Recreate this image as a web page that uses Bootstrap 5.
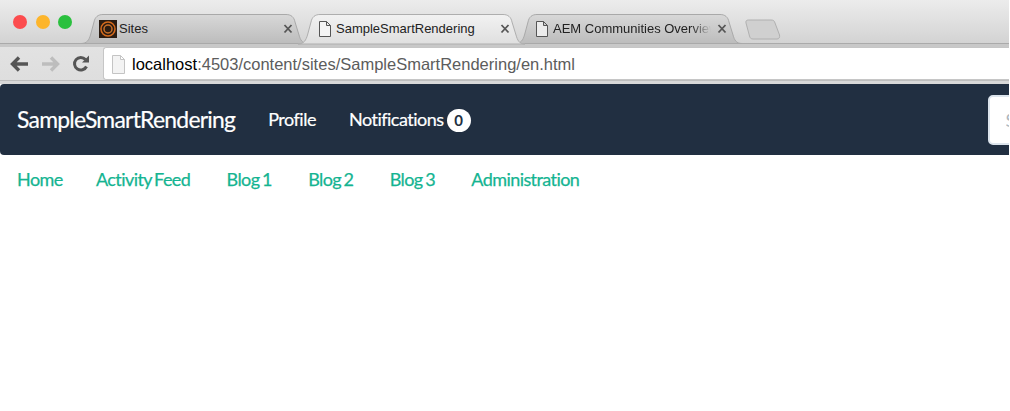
<!DOCTYPE html>
<html lang="en">
<head>
<meta charset="utf-8">
<title>SampleSmartRendering</title>
<link rel="stylesheet" href="https://cdn.jsdelivr.net/npm/bootstrap@5.3.0/dist/css/bootstrap.min.css">
<style>
html,body{height:411px;overflow:hidden;background:#fff}
body{font-family:"Liberation Sans",Arial,sans-serif;padding-right:1px}
.chrome-top{height:44px;background:linear-gradient(#ececec,#d3d3d3);border-bottom:1px solid #aaa}
.lights{gap:8.5px;padding:15px 0 0 13px;width:84px;flex:none}
.light{width:14px;height:14px;border-radius:50%}
.l-r{background:#fc4c4e}.l-y{background:#fdb52b}.l-g{background:#2ac03e}
.tabs{padding-top:14px}
.tab-shape{position:relative;width:227px;height:30px;margin-right:-10px;font-size:13px;color:#222;flex:none}
.tab-shape>svg.bg{position:absolute;left:0;top:0}
.tab-body{position:relative;height:30px;padding:0 0 0 18px;gap:2px}
.tab-fav{width:18px;height:18px;flex:none}
.tab-label{white-space:nowrap;overflow:hidden;width:175px;line-height:30px}
.tab-fade{width:160px;-webkit-mask-image:linear-gradient(90deg,#000 138px,transparent 158px);mask-image:linear-gradient(90deg,#000 138px,transparent 158px)}
.tab-x{position:absolute;right:15px;top:8px;width:10px;height:14px}
.new-tab{margin:5px 0 0 13px}
.toolbar{background:linear-gradient(#e2e2e2,#dedede);border-top:3px solid #c8c8c8;box-sizing:content-box;height:33px}
.nav-ics{width:103px;flex:none;padding-left:10px;gap:12px}
.urlbox{flex:1;background:#fff;border:1px solid #c6c6c6;border-right:0;border-radius:3px 0 0 3px;height:33px;padding:2px 0 0 7px;gap:6px;font-size:16.5px;color:#5c5c5c}
.urlbox b{font-weight:400;color:#000}
.toolbar-gap{height:4px;background:#d8d8d8;border-top:1px solid #bdbdbd}
.site-bar{height:71px;background:#212f41;border-radius:4px 0 0 4px;overflow:hidden;padding-left:17px;font-family:Lato,sans-serif;flex-wrap:nowrap}
.site-brand{color:#fff;font-size:22.9px;letter-spacing:-.75px;text-decoration:none;margin-right:33px;white-space:nowrap;line-height:1;-webkit-text-stroke:.2px #fff}
.site-link{color:#fff;font-size:18px;letter-spacing:-.5px;text-decoration:none;margin-right:33px;white-space:nowrap;-webkit-text-stroke:.2px #fff}
.count{background:#fff;color:#212f41;border-radius:12px;font-size:15px;font-weight:700;letter-spacing:0;width:24px;height:23px;margin-left:3px;line-height:23px;text-align:center;display:inline-block;vertical-align:0;-webkit-text-stroke:0}
.search-in{flex:none;width:160px;height:50px;margin-left:484px;border:2px solid #dce4ec;border-radius:5px;background:#fff;font-size:18px;padding:0 16px;font-family:Lato,sans-serif}
.search-in::placeholder{color:#acb6c0}
.sub-links{padding:12px 0 0 17px;gap:36.3px;font-family:Lato,sans-serif;font-size:18px;letter-spacing:-.58px;word-spacing:-1.5px;line-height:25px;-webkit-text-stroke:.25px #14b491}
.sub-links a{color:#14b491;text-decoration:none}
.sub-links a:first-child{margin-right:-3px}
</style>
</head>
<body>
<div class="chrome-top d-flex">
  <div class="lights d-flex">
    <span class="light l-r"></span><span class="light l-y"></span><span class="light l-g"></span>
  </div>
  <div class="tabs d-flex">
    <div class="tab-shape" style="margin-left:-3px">
      <svg class="bg" width="227" height="30" viewBox="0 0 227 30"><defs><linearGradient id="ia" x1="0" y1="0" x2="0" y2="1"><stop offset="0" stop-color="#d8d8d8"/><stop offset="1" stop-color="#bcbcbc"/></linearGradient></defs><path d="M0 29.500C6 29.500 8 26 9.500 21L13 8C14 3 17 .5 22 .5H205C210 .5 213 3 214 8L218 21C219.500 26 221 29.500 227 29.500Z" fill="url(#ia)" stroke="#a9a9a9"/></svg>
      <div class="tab-body d-flex align-items-center">
        <svg class="tab-fav" viewBox="0 0 18 18"><rect width="18" height="18" fill="#2a1c12"/><circle cx="9" cy="9" r="7" fill="none" stroke="#d56a1c" stroke-width="1.500"/><circle cx="9" cy="9" r="4" fill="none" stroke="#c9702a" stroke-width="1.500"/></svg>
        <span class="tab-label">Sites</span>
      </div>
      <svg class="tab-x" viewBox="0 0 10 14"><path d="M1.500 3L8.500 10.500M8.500 3L1.500 10.500" stroke="#555" stroke-width="1.800"/></svg>
    </div>
    <div class="tab-shape" style="z-index:2">
      <svg class="bg" width="227" height="31" viewBox="0 0 227 31"><defs><linearGradient id="ac" x1="0" y1="0" x2="0" y2="1"><stop offset="0" stop-color="#f2f2f2"/><stop offset="1" stop-color="#dfdfdf"/></linearGradient></defs><path d="M0 30C6 30 8 26 9.500 21L13 8C14 3 17 .5 22 .5H205C210 .5 213 3 214 8L218 21C219.500 26 221 30 227 30Z" fill="url(#ac)" stroke="#aeaeae"/></svg>
      <div class="tab-body d-flex align-items-center">
        <svg class="tab-fav" viewBox="0 0 18 18"><path d="M3.500 1.500H10.500L14.500 5.500V16.500H3.500ZM10.500 1.500V5.500H14.500" fill="#f4f4f4" stroke="#555" stroke-width="1"/></svg>
        <span class="tab-label">SampleSmartRendering</span>
      </div>
      <svg class="tab-x" viewBox="0 0 10 14"><path d="M1.500 3L8.500 10.500M8.500 3L1.500 10.500" stroke="#555" stroke-width="1.800"/></svg>
    </div>
    <div class="tab-shape" style="z-index:1">
      <svg class="bg" width="227" height="30" viewBox="0 0 227 30"><path d="M0 29.500C6 29.500 8 26 9.500 21L13 8C14 3 17 .5 22 .5H205C210 .5 213 3 214 8L218 21C219.500 26 221 29.500 227 29.500Z" fill="url(#ia)" stroke="#a9a9a9"/></svg>
      <div class="tab-body d-flex align-items-center">
        <svg class="tab-fav" viewBox="0 0 18 18"><path d="M3.500 1.500H10.500L14.500 5.500V16.500H3.500ZM10.500 1.500V5.500H14.500" fill="#ececec" stroke="#555" stroke-width="1"/></svg>
        <span class="tab-label tab-fade">AEM Communities Overview</span>
      </div>
      <svg class="tab-x" viewBox="0 0 10 14"><path d="M1.500 3L8.500 10.500M8.500 3L1.500 10.500" stroke="#555" stroke-width="1.800"/></svg>
    </div>
    <svg class="new-tab" width="36" height="21" viewBox="0 0 36 21"><path d="M1 4C.5 2 1.500 1 3.500 1H26C28.500 1 29.500 2 30 4L34.500 16C35 18.500 34 20 32 20H8C6 20 5 19 4.500 17Z" fill="#d0d0d0" stroke="#b0b0b0"/></svg>
  </div>
</div>
<div class="toolbar d-flex">
  <div class="nav-ics d-flex align-items-center">
    <svg width="19" height="18" viewBox="0 0 19 18"><path d="M9 2.500L2.500 9L9 15.500M3 9H18" fill="none" stroke="#555" stroke-width="3.400"/></svg>
    <svg width="19" height="18" viewBox="0 0 19 18"><path d="M10 2.500L16.500 9L10 15.500M16 9H1" fill="none" stroke="#bdbdbd" stroke-width="3.400"/></svg>
    <svg width="18" height="18" viewBox="0 0 18 18"><path d="M14.500 11.500A6.300 6.300 0 1 1 13.500 4.500" fill="none" stroke="#555" stroke-width="3"/><path d="M10 7.500H17V.5Z" fill="#555"/></svg>
  </div>
  <div class="urlbox d-flex align-items-center">
    <svg width="15" height="19" viewBox="0 0 15 19"><path d="M1.500 .5H9.500L13.500 4.500V18.500H1.500ZM9.500 .5V4.500H13.500" fill="#f3f3f3" stroke="#c4c4c4"/></svg>
    <span><b>localhost</b>:4503/content/sites/SampleSmartRendering/en.html</span>
  </div>
</div>
<div class="toolbar-gap"></div>
<nav class="site-bar d-flex align-items-center">
  <a class="site-brand" href="#">SampleSmartRendering</a>
  <a class="site-link" href="#">Profile</a>
  <a class="site-link" href="#">Notifications<span class="count">0</span></a>
  <input class="search-in" type="text" placeholder="Search" aria-label="Search">
</nav>
<div class="sub-links d-flex">
  <a href="#">Home</a><a href="#">Activity Feed</a><a href="#">Blog 1</a><a href="#">Blog 2</a><a href="#">Blog 3</a><a href="#">Administration</a>
</div>
<script src="https://cdn.jsdelivr.net/npm/bootstrap@5.3.0/dist/js/bootstrap.bundle.min.js"></script>
</body>
</html>
